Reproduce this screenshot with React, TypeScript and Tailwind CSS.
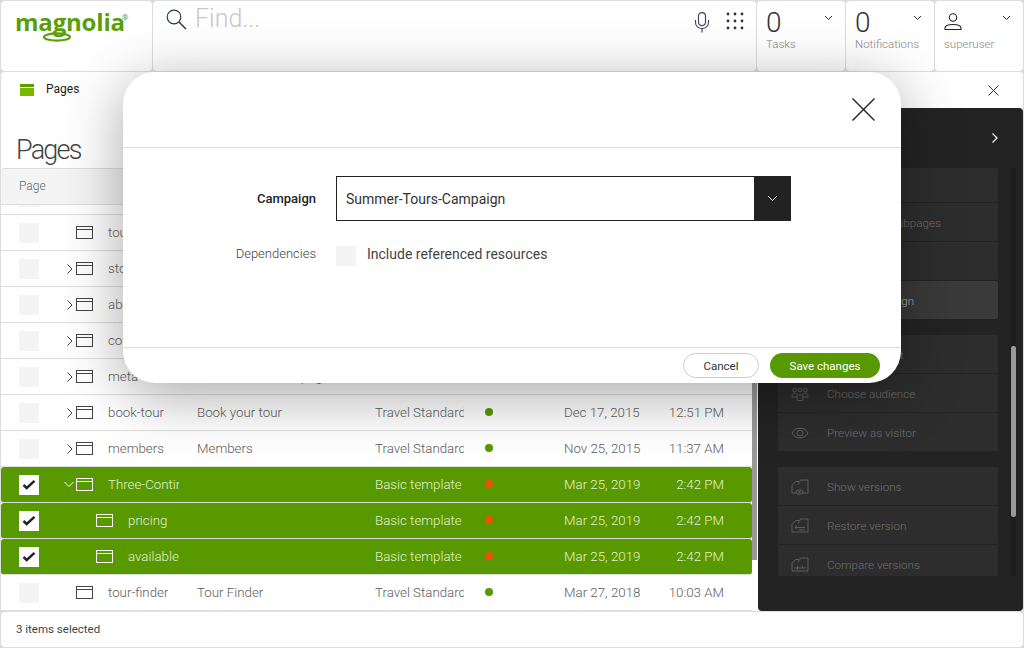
import React from 'react'

type Row = {
    name: string
    title?: string
    template: string
    date: string
    time: string
    arrow?: 'right' | 'down'
    child?: boolean
    selected?: boolean
}

const rows: Row[] = [
    { name: 'travel', title: 'Home', template: 'Travel Standard', date: 'Mar 27, 2018', time: '10:03 AM', arrow: 'down' },
    { name: 'tours', title: 'Tours', template: 'Travel Standard', date: 'Dec 17, 2015', time: '12:51 PM' },
    { name: 'stories', title: 'Stories', template: 'Travel Standard', date: 'Dec 17, 2015', time: '12:51 PM', arrow: 'right' },
    { name: 'about', title: 'About', template: 'Travel Standard', date: 'Dec 17, 2015', time: '12:51 PM', arrow: 'right' },
    { name: 'contact', title: 'Contact', template: 'Travel Standard', date: 'Dec 17, 2015', time: '12:51 PM', arrow: 'right' },
    { name: 'meta', title: 'Meta information page', template: 'Travel Standard', date: 'Dec 17, 2015', time: '12:51 PM', arrow: 'right' },
    { name: 'book-tour', title: 'Book your tour', template: 'Travel Standard', date: 'Dec 17, 2015', time: '12:51 PM', arrow: 'right' },
    { name: 'members', title: 'Members', template: 'Travel Standard', date: 'Nov 25, 2015', time: '11:37 AM', arrow: 'right' },
    { name: 'Three-Continents', template: 'Basic template', date: 'Mar 25, 2019', time: '2:42 PM', arrow: 'down', selected: true },
    { name: 'pricing', template: 'Basic template', date: 'Mar 25, 2019', time: '2:42 PM', child: true, selected: true },
    { name: 'available', template: 'Basic template', date: 'Mar 25, 2019', time: '2:42 PM', child: true, selected: true },
    { name: 'tour-finder', title: 'Tour Finder', template: 'Travel Standard', date: 'Mar 27, 2018', time: '10:03 AM' },
]

function PageIcon() {
    return (
        <svg width="17" height="13" viewBox="0 0 17 13" fill="none" stroke="currentColor" className="shrink-0">
            <rect x="0.5" y="0.5" width="16" height="12" />
            <path d="M0.5 3.5H16.5" />
        </svg>
    )
}

function Chevron({ dir }: { dir: 'right' | 'down' }) {
    if (dir === 'right') {
        return (
            <svg width="10" height="12" viewBox="0 0 10 12" fill="none" stroke="currentColor" className="shrink-0">
                <path d="M1.500 1.500L6 6l-4.500 4.500" />
            </svg>
        )
    }
    return (
        <svg width="10" height="12" viewBox="0 0 10 12" fill="none" stroke="currentColor" className="-ml-[2px] mr-[2px] shrink-0">
            <path d="M0.5 3l4.5 4.500L9.500 3" />
        </svg>
    )
}

function SmallDown({ className }: { className?: string }) {
    return (
        <svg width="9" height="6" viewBox="0 0 9 6" fill="none" stroke="currentColor" className={className}>
            <path d="M1 1l3.500 3.500L8 1" />
        </svg>
    )
}

function TableRow({ row }: { row: Row }) {
    return (
        <div
            className={
                row.selected
                    ? 'flex h-[36px] shrink-0 items-center rounded-[3px] border-b border-[#dddddd] bg-[#589900] pl-[18px] text-[#e4f0d2]'
                    : 'flex h-[36px] shrink-0 items-center border-b border-[#dddddd] pl-[18px] text-[#606060]'
            }
        >
            <div
                className={
                    row.selected
                        ? 'flex h-[20px] w-[20px] shrink-0 items-center justify-center bg-white'
                        : 'h-[20px] w-[20px] shrink-0 bg-[#f4f4f4]'
                }
            >
                {row.selected && (
                    <svg width="14" height="11" viewBox="0 0 14 11" fill="none" stroke="#222222" strokeWidth="2.400">
                        <path d="M1.500 6l3.200 3L12.500 1.800" />
                    </svg>
                )}
            </div>
            <div className={row.child ? 'flex w-[140px] shrink-0 items-center pl-[57px]' : 'flex w-[140px] shrink-0 items-center pl-[27px]'}>
                {!row.child && (
                    <div className={row.selected ? 'w-[10px] shrink-0 text-white' : 'w-[10px] shrink-0 text-[#444444]'}>
                        {row.arrow && <Chevron dir={row.arrow} />}
                    </div>
                )}
                <span className={row.selected ? 'text-white' : 'text-[#444444]'}>
                    <PageIcon />
                </span>
                <span className="ml-[15px] overflow-hidden whitespace-nowrap">{row.name}</span>
            </div>
            <div className="ml-[18px] w-[178px] shrink-0 overflow-hidden whitespace-nowrap">{row.title}</div>
            <div className="w-[89px] shrink-0 overflow-hidden whitespace-nowrap">{row.template}</div>
            <div className={row.selected ? 'ml-[21px] h-[8px] w-[8px] shrink-0 -translate-y-px rounded-full bg-[#f04e0e]' : 'ml-[21px] h-[8px] w-[8px] shrink-0 -translate-y-px rounded-full bg-[#589900]'} />
            <div className="ml-[71px] w-[100px] shrink-0 whitespace-nowrap">{row.date}</div>
            <div className="w-[60px] shrink-0 whitespace-nowrap text-right">{row.time}</div>
        </div>
    )
}

function HeaderCell({ big, label, icon }: { big?: string; label: string; icon?: React.ReactNode }) {
    return (
        <div className="relative h-full w-[88px] shrink-0 rounded-[4px] bg-white pl-[9px] pt-[6px]">
            {big ? <div className="h-[28px] text-[28px] leading-[32px] font-light text-[#333333]">{big}</div> : <div className="h-[28px] pt-[6px] text-[#222222]">{icon}</div>}
            <div className="mt-[1px] text-[11.5px] leading-[16px] font-light text-[#8a8a8a]">{label}</div>
            <SmallDown className="absolute right-[12px] top-[14px] text-[#223344]" />
        </div>
    )
}

const actionIcon = 'h-[18px] w-[18px] shrink-0'

const versionBase = 'M6 15H1V7.500L4.500 3.500H8M9.500 2H17V15H6M9.500 2L7 6.500'

const icons: Record<string, React.ReactNode> = {
    audience: (
        <svg viewBox="0 0 18 18" fill="none" stroke="currentColor" strokeWidth="0.900" className={actionIcon}>
            <circle cx="3.500" cy="5" r="1.800" />
            <circle cx="9" cy="5" r="1.800" />
            <circle cx="14.500" cy="5" r="1.800" />
            <path d="M5.500 12H1.200v-1.500c0-1.600 1-2.400 2.300-2.400s2.200.8 2.300 1.800" />
            <path d="M12.500 12h4.300v-1.500c0-1.600-1-2.400-2.300-2.400s-2.200.8-2.300 1.800" />
            <rect x="6" y="10" width="6" height="5.500" rx="1" />
        </svg>
    ),
    eye: (
        <svg viewBox="0 0 18 18" fill="none" stroke="currentColor" strokeWidth="0.900" className={actionIcon}>
            <path d="M1 9c2-3.200 4.800-4.800 8-4.800s6 1.600 8 4.800c-2 3.200-4.800 4.800-8 4.800S3 12.200 1 9z" />
            <circle cx="9" cy="9" r="3" />
        </svg>
    ),
    show: (
        <svg viewBox="0 0 18 18" fill="none" stroke="currentColor" strokeWidth="0.900" className={actionIcon}>
            <path d={versionBase} />
            <ellipse cx="8.500" cy="14" rx="3.500" ry="2.200" fill="#2d2d2d" />
            <circle cx="8.500" cy="14" r="0.800" />
        </svg>
    ),
    restore: (
        <svg viewBox="0 0 18 18" fill="none" stroke="currentColor" strokeWidth="0.900" className={actionIcon}>
            <path d={versionBase} />
            <path d="M4 10.500h10M4 10.500l2-1.500M4 10.500l2 1.500M8 13h6" />
        </svg>
    ),
    compare: (
        <svg viewBox="0 0 18 18" fill="none" stroke="currentColor" strokeWidth="0.900" className={actionIcon}>
            <path d={versionBase} />
            <path d="M3 12h12M6.500 10v4M11.500 9.500v2.500" />
        </svg>
    ),
}

function Action({ label, icon, active, clipped }: { label: string; icon?: string; active?: boolean; clipped?: boolean }) {
    return (
        <div
            className={
                (active ? 'bg-[#3a3a3a] text-[#b0b0b0] ' : 'bg-[#2d2d2d] text-[#6f6f6f] ') +
                (clipped ? 'h-[34px] ' : 'h-[38px] ') +
                'flex w-[220px] shrink-0 items-center rounded-[2px] pl-[13px] pt-[2px]'
            }
        >
            <div className="h-[18px] w-[18px] shrink-0 text-[#626262]">{icon && icons[icon]}</div>
            <span className="ml-[18px] pt-[2px] text-[11.7px] font-light whitespace-nowrap">{label}</span>
        </div>
    )
}

export default function App() {
    return (
        <div className="relative flex h-[648px] w-[1024px] flex-col gap-px overflow-hidden bg-[#dddddd] p-px font-['Roboto',sans-serif] text-[13.3px] font-light">
            {/* top bar */}
            <div className="flex h-[70px] shrink-0 gap-px">
                <div className="relative w-[151px] shrink-0 rounded-[4px] bg-white">
                    <div className="absolute left-[14px] top-[3px] font-['Open_Sans',sans-serif] text-[24px] leading-[36px] font-bold tracking-[-0.2px] text-[#5a9e0a]">
                        magnolia
                    </div>
                    <svg width="30" height="11" viewBox="0 0 30 11" fill="none" stroke="#5a9e0a" strokeWidth="2.200" className="absolute left-[41px] top-[31px]">
                        <ellipse cx="15" cy="5" rx="13" ry="3.600" />
                    </svg>
                    <span className="absolute left-[121px] top-[11px] text-[8px] font-normal text-[#5a9e0a]">®</span>
                </div>
                <div className="flex min-w-0 flex-1 rounded-[4px] bg-white pl-[13px] pr-[12px] pt-[8px]">
                    <svg width="21" height="21" viewBox="0 0 21 21" fill="none" stroke="#2a3a44" strokeWidth="1.200" className="shrink-0">
                        <circle cx="8" cy="8" r="6.800" />
                        <path d="M13 13l7 7" strokeWidth="1.500" />
                    </svg>
                    <div className="ml-[8px] -translate-y-[2px] text-[25px] leading-[24px] font-light text-[#c8c8c8]">Find...</div>
                    <div className="ml-auto flex items-start gap-[16px] pt-[3px]">
                        <svg width="16" height="21" viewBox="0 0 16 21" fill="none" stroke="#334455" strokeWidth="1.100">
                            <rect x="4.500" y="0.600" width="7" height="13" rx="3.500" />
                            <path d="M1.500 8v2.500c0 3.600 3 6 6.500 6s6.500-2.400 6.500-6V8M8 16.500V20.500" />
                        </svg>
                        <svg width="18" height="18" viewBox="0 0 18 18" fill="#333333">
                            <circle cx="2" cy="2" r="1.400" />
                            <circle cx="9" cy="2" r="1.400" />
                            <circle cx="16" cy="2" r="1.400" />
                            <circle cx="2" cy="9" r="1.400" />
                            <circle cx="9" cy="9" r="1.400" />
                            <circle cx="16" cy="9" r="1.400" />
                            <circle cx="2" cy="16" r="1.400" />
                            <circle cx="9" cy="16" r="1.400" />
                            <circle cx="16" cy="16" r="1.400" />
                        </svg>
                    </div>
                </div>
                <HeaderCell big="0" label="Tasks" />
                <HeaderCell big="0" label="Notifications" />
                <HeaderCell
                    label="superuser"
                    icon={
                        <svg width="18" height="18" viewBox="0 0 18 18" fill="none" stroke="currentColor" strokeWidth="1.100">
                            <circle cx="9" cy="4.500" r="3.700" />
                            <path d="M1 16.500v-1.500c0-2.500 3-3.500 8-3.500s8 1 8 3.500v1.500z" />
                        </svg>
                    }
                />
            </div>

            {/* tab bar */}
            <div className="-mb-px flex h-[36px] shrink-0 items-center rounded-t-[4px] bg-white pl-[19px] pr-[24px]">
                <svg width="14" height="12" viewBox="0 0 14 12" className="shrink-0">
                    <rect width="14" height="3" y="0" fill="#5f9c00" />
                    <rect width="14" height="8" y="4" fill="#7ab800" />
                </svg>
                <span className="ml-[12px] -translate-y-px text-[12px] font-normal text-[#222222]">Pages</span>
                <svg width="11" height="11" viewBox="0 0 11 11" fill="none" stroke="#333333" className="ml-auto">
                    <path d="M0.500 0.500l10 10M10.500 0.500l-10 10" />
                </svg>
            </div>

            {/* workspace */}
            <div className="flex min-h-0 flex-1 bg-white">
                <div className="flex w-[751px] shrink-0 flex-col">
                    <div className="flex h-[60px] shrink-0 items-end pl-[15px] text-[27px] leading-[36px] font-light tracking-[-1.800px] text-[#444444]">Pages</div>
                    <div className="flex h-[37px] shrink-0 items-center rounded-t-[4px] border-b border-t border-[#dddddd] bg-[#f4f4f4] pb-[2px] pl-[18px] text-[12px] text-[#666666]">Page</div>
                    <div className="flex min-h-0 flex-1 flex-col overflow-hidden">
                        <div className="-mt-[26px] flex flex-col">
                            {rows.map((row) => (
                                <TableRow key={row.name} row={row} />
                            ))}
                        </div>
                    </div>
                </div>
                <div className="w-[6px] shrink-0 pt-[97px]">
                    <div className="h-[355px] w-[5px] bg-[#999999]" />
                </div>
                <div className="flex min-w-0 flex-1 flex-col rounded-[4px] bg-[#232323] pl-[20px]">
                    <div className="flex h-[60px] shrink-0 items-center justify-end pr-[24px] text-white">
                        <svg width="8" height="12" viewBox="0 0 8 12" fill="none" stroke="currentColor" strokeWidth="1.200">
                            <path d="M1.500 1.500L6 6l-4.500 4.500" />
                        </svg>
                    </div>
                    <div className="flex h-[408px] shrink-0">
                        <div className="flex w-[220px] shrink-0 flex-col gap-px overflow-hidden">
                            <Action label="Publish" clipped />
                            <Action label="Publish incl. subpages" />
                            <Action label="Unpublish" />
                            <Action label="Add to campaign" active />
                            <div className="mt-[15px]">
                                <Action label="Choose variant" />
                            </div>
                            <Action label="Choose audience" icon="audience" />
                            <Action label="Preview as visitor" icon="eye" />
                            <div className="mt-[15px]">
                                <Action label="Show versions" icon="show" />
                            </div>
                            <Action label="Restore version" icon="restore" />
                            <Action label="Compare versions" icon="compare" />
                        </div>
                        <div className="ml-[12px] h-full w-[6px] bg-[#1c1c1c] pt-[178px]">
                            <div className="ml-px h-[171px] w-[5px] rounded-[2px] bg-[#999999]" />
                        </div>
                    </div>
                </div>
            </div>

            {/* status bar */}
            <div className="flex h-[35px] shrink-0 items-center rounded-[4px] bg-white pl-[15px] text-[11.5px] font-normal text-[#444444]">3 items selected</div>

            {/* dialog */}
            <div className="absolute left-[123px] top-[72px] flex h-[311px] w-[778px] flex-col rounded-[32px] bg-white font-normal shadow-[0_12px_60px_rgba(0,0,0,0.35)]">
                <div className="flex h-[76px] shrink-0 items-center justify-end border-b border-[#dddddd] pr-[25px]">
                    <svg width="25" height="25" viewBox="0 0 25 25" fill="none" stroke="#222222" strokeWidth="1.400">
                        <path d="M1.500 1.500l22 22M23.500 1.500l-22 22" />
                    </svg>
                </div>
                <div className="flex min-h-0 flex-1 flex-col pt-[28px]">
                    <div className="flex h-[45px] items-center">
                        <div className="w-[193px] shrink-0 text-right text-[13px] font-medium text-[#222222]">Campaign</div>
                        <div className="ml-[20px] flex h-[45px] w-[455px] items-stretch border border-[#222222]">
                            <div className="flex flex-1 items-center pl-[9px] pt-px text-[14px] text-[#333333]">Summer-Tours-Campaign</div>
                            <div className="flex w-[36px] items-center justify-center bg-[#222222] text-white">
                                <svg width="11" height="7" viewBox="0 0 11 7" fill="none" stroke="currentColor">
                                    <path d="M1 1l4.500 4.500L10 1" />
                                </svg>
                            </div>
                        </div>
                    </div>
                    <div className="mt-[25px] flex h-[20px] items-center">
                        <div className="w-[193px] shrink-0 -translate-y-[2px] text-right text-[13px] font-light text-[#444444]">Dependencies</div>
                        <div className="ml-[20px] h-[20px] w-[20px] bg-[#f4f4f4]" />
                        <div className="ml-[11px] -translate-y-[2px] text-[14px] font-normal text-[#444444]">Include referenced resources</div>
                    </div>
                </div>
                <div className="flex h-[36px] shrink-0 items-start justify-end gap-[11px] border-t border-[#dddddd] pr-[21px] pt-[5px] text-[11.5px]">
                    <button className="flex h-[25px] w-[76px] items-center justify-center rounded-full border border-[#cccccc] bg-white pt-[2px] text-[#333333]">Cancel</button>
                    <button className="flex h-[25px] w-[110px] items-center justify-center rounded-full bg-[#589900] pt-[2px] text-white">Save changes</button>
                </div>
            </div>
        </div>
    )
}
